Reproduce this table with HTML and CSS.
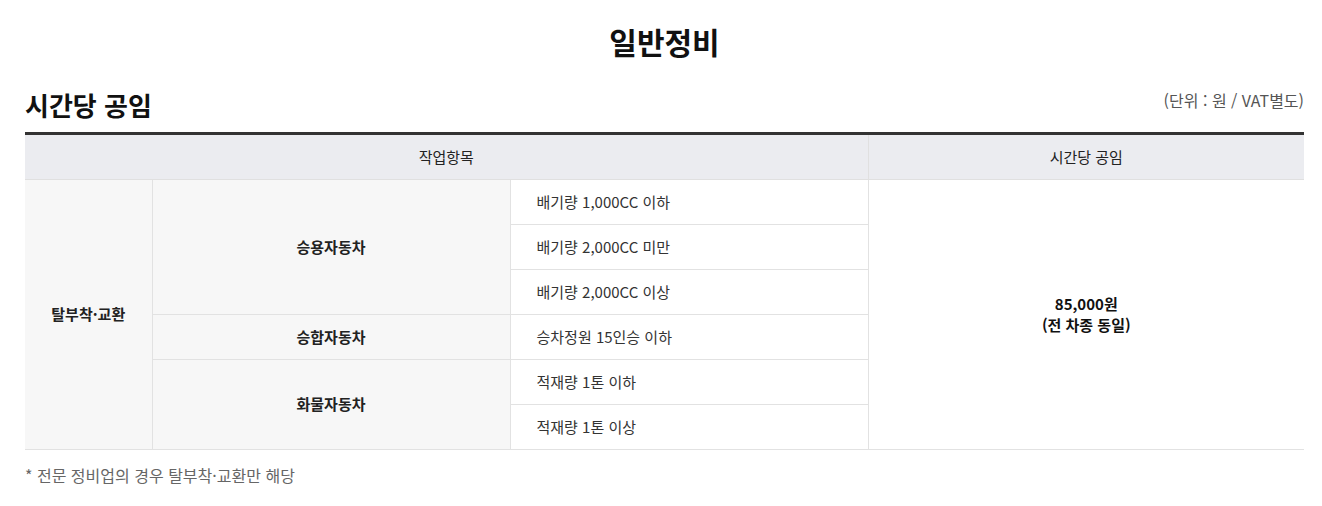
FILE: index.html
```html
<!DOCTYPE html>
<html lang="ko">
<head>
<meta charset="utf-8">
<link rel="stylesheet" href="styles.css">
</head>
<body>
<div class="wrap">
  <h1 class="page-title">일반정비</h1>
  <div class="sec-head">
    <h2 class="sec-title">시간당 공임</h2>
    <span class="unit">(단위 : 원 / VAT별도)</span>
  </div>
  <table class="price">
    <colgroup>
      <col class="c1"><col class="c2"><col class="c3"><col class="c4">
    </colgroup>
    <thead>
      <tr><th colspan="3">작업항목</th><th>시간당 공임</th></tr>
    </thead>
    <tbody>
      <tr>
        <td rowspan="6" class="grp first">탈부착·교환</td>
        <td rowspan="3" class="grp">승용자동차</td>
        <td class="item">배기량 1,000CC 이하</td>
        <td rowspan="6" class="price-cell">85,000원<br>(전 차종 동일)</td>
      </tr>
      <tr><td class="item">배기량 2,000CC 미만</td></tr>
      <tr><td class="item">배기량 2,000CC 이상</td></tr>
      <tr><td class="grp">승합자동차</td><td class="item">승차정원 15인승 이하</td></tr>
      <tr><td rowspan="2" class="grp">화물자동차</td><td class="item">적재량 1톤 이하</td></tr>
      <tr><td class="item">적재량 1톤 이상</td></tr>
    </tbody>
  </table>
  <p class="note">* 전문 정비업의 경우 탈부착·교환만 해당</p>
</div>
</body>
</html>
```
FILE: styles.css
```css
html, body {
  margin: 0;
  padding: 0;
  background: #fff;
}
body {
  font-family: "Noto Sans CJK KR", "Noto Sans", sans-serif;
  color: #222;
}
.wrap {
  width: 1279px;
  margin-left: 25px;
}
.page-title {
  margin: 0;
  padding-top: 20px;
  height: 50px;
  font-size: 30px;
  line-height: 42px;
  font-weight: 700;
  text-align: center;
  color: #111;
}
.sec-head {
  display: flex;
  justify-content: space-between;
  align-items: flex-end;
  margin-top: 12px;
  height: 50px;
}
.sec-title {
  margin: 0;
  font-size: 26px;
  line-height: 36px;
  font-weight: 700;
  color: #111;
  padding-bottom: 9px;
}
.unit {
  font-size: 16px;
  line-height: 22px;
  color: #555;
  padding-bottom: 21px;
}
.price {
  width: 1279px;
  border-collapse: collapse;
  table-layout: fixed;
  border-top: 3px solid #333;
  font-size: 15px;
}
.c1 { width: 127px; }
.c2 { width: 358px; }
.c3 { width: 358px; }
.c4 { width: 436px; }
.price th {
  height: 42px;
  padding: 0 0 2px;
  background: #ebecf0;
  font-weight: 400;
  color: #222;
  border-bottom: 1px solid #e0e0e0;
  border-left: 1px solid #e0e0e0;
}
.price th:first-child { border-left: none; }
.price td {
  height: 42px;
  padding: 0 0 2px;
  border-bottom: 1px solid #e2e2e2;
  border-left: 1px solid #e2e2e2;
  vertical-align: middle;
}
.price td.first { border-left: none; }
.grp {
  background: #f7f7f7;
  font-weight: 700;
  text-align: center;
  color: #222;
}
.price td.item {
  padding-left: 26px;
  color: #333;
  background: #fff;
}
.price-cell {
  text-align: center;
  font-weight: 700;
  line-height: 21px;
  color: #111;
  background: #fff;
}
.note {
  margin: 14px 0 0;
  font-size: 16px;
  line-height: 22px;
  color: #666;
}
```
